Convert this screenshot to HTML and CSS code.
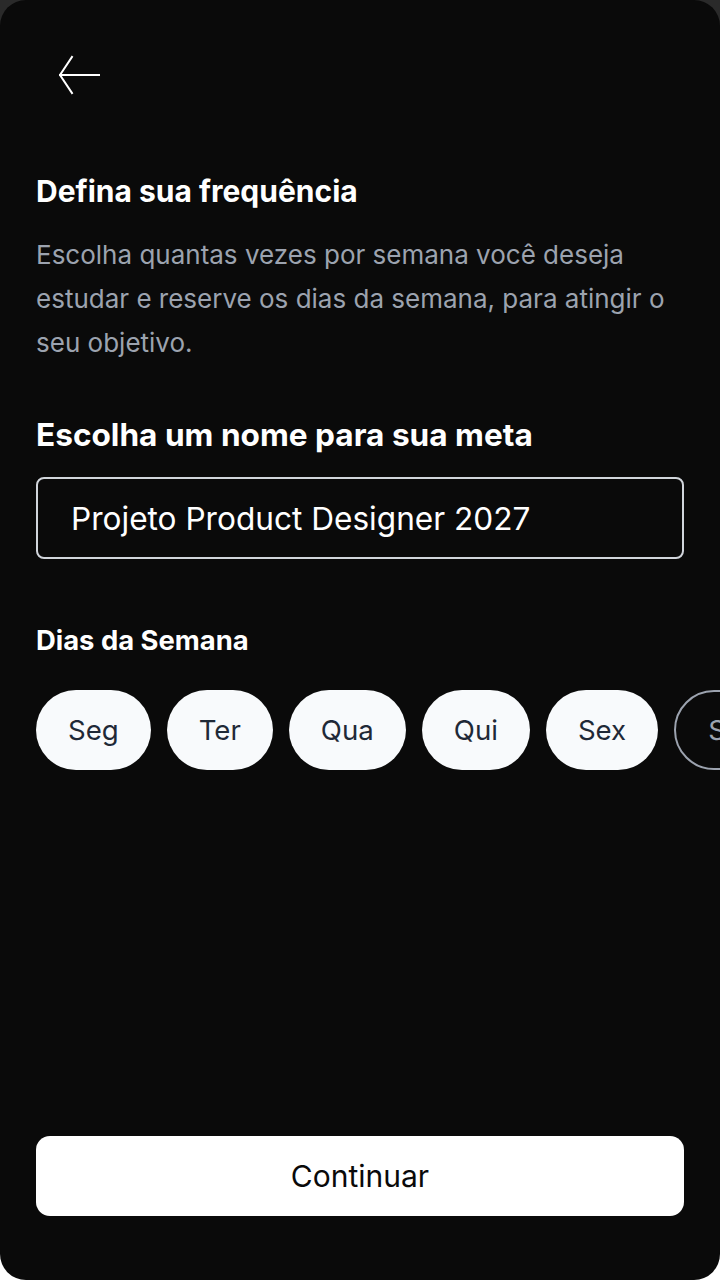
FILE: index.html
```html
<!DOCTYPE html>
<html lang="pt-BR">
<head>
<meta charset="utf-8">
<title>Defina sua frequência</title>
<link rel="stylesheet" href="styles.css">
</head>
<body>
<div class="screen">
  <div class="topbar">
    <button class="back" aria-label="Voltar">
      <svg width="44" height="42" viewBox="0 0 44 42" fill="none" stroke="#ffffff" stroke-width="2" stroke-linecap="square">
        <path d="M2 21 H41"/>
        <path d="M14 3 L2 21 L14 39"/>
      </svg>
    </button>
  </div>
  <h1 class="title">Defina sua frequência</h1>
  <p class="desc">Escolha quantas vezes por semana você deseja estudar e reserve os dias da semana, para atingir o seu objetivo.</p>
  <h2 class="label">Escolha um nome para sua meta</h2>
  <div class="input">Projeto Product Designer 2027</div>
  <h3 class="sub">Dias da Semana</h3>
  <div class="days">
    <span class="day">Seg</span>
    <span class="day">Ter</span>
    <span class="day">Qua</span>
    <span class="day">Qui</span>
    <span class="day">Sex</span>
    <span class="day off">Sáb</span>
    <span class="day off">Dom</span>
  </div>
  <div class="spacer"></div>
  <button class="cta">Continuar</button>
</div>
</body>
</html>
```

FILE: styles.css
```css
* { box-sizing: border-box; }
html, body {
  margin: 0;
  padding: 0;
  width: 720px;
  height: 1280px;
  background: linear-gradient(#2a2a2a 0 50%, #ffffff 50% 100%);
  overflow: hidden;
}
.screen {
  width: 720px;
  height: 1280px;
  background: #0a0a0a;
  border-radius: 26px;
  padding: 0 36px 64px;
  display: flex;
  flex-direction: column;
  font-family: "Inter", "Noto Sans", sans-serif;
  color: #ffffff;
  overflow: hidden;
}
.topbar {
  height: 170px;
  padding-top: 54px;
}
.back {
  background: none;
  border: 0;
  padding: 0;
  margin-left: 22px;
  display: block;
  cursor: pointer;
}
.back svg { display: block; }
.title {
  margin: 0;
  font-size: 30px;
  font-weight: 700;
  line-height: 42px;
}
.desc {
  margin: 21px 0 0;
  font-size: 26px;
  line-height: 44px;
  color: #9ca3af;
  font-weight: 400;
}
.label {
  margin: 50px 0 0;
  font-size: 31.6px;
  font-weight: 700;
  line-height: 40px;
}
.input {
  margin-top: 22px;
  height: 82px;
  border: 2px solid #d1d5db;
  border-radius: 8px;
  padding: 0 33px;
  display: flex;
  align-items: center;
  font-size: 31.6px;
  color: #ffffff;
}
.sub {
  margin: 64px 0 0;
  font-size: 27.4px;
  font-weight: 700;
  line-height: 34px;
}
.days {
  margin-top: 33px;
  display: flex;
  gap: 16px;
  margin-right: -36px;
  overflow: hidden;
}
.day {
  flex: none;
  height: 80px;
  padding: 0 32px;
  border-radius: 40px;
  background: #f8fafc;
  color: #1f2937;
  font-size: 27.6px;
  display: flex;
  align-items: center;
}
.day.off {
  background: transparent;
  border: 2px solid #9ca3af;
  color: #9ca3af;
}
.spacer { flex: 1; }
.cta {
  height: 80px;
  border: 0;
  border-radius: 14px;
  background: #ffffff;
  color: #0a0a0a;
  font-family: inherit;
  font-size: 30px;
  width: 100%;
}
```
